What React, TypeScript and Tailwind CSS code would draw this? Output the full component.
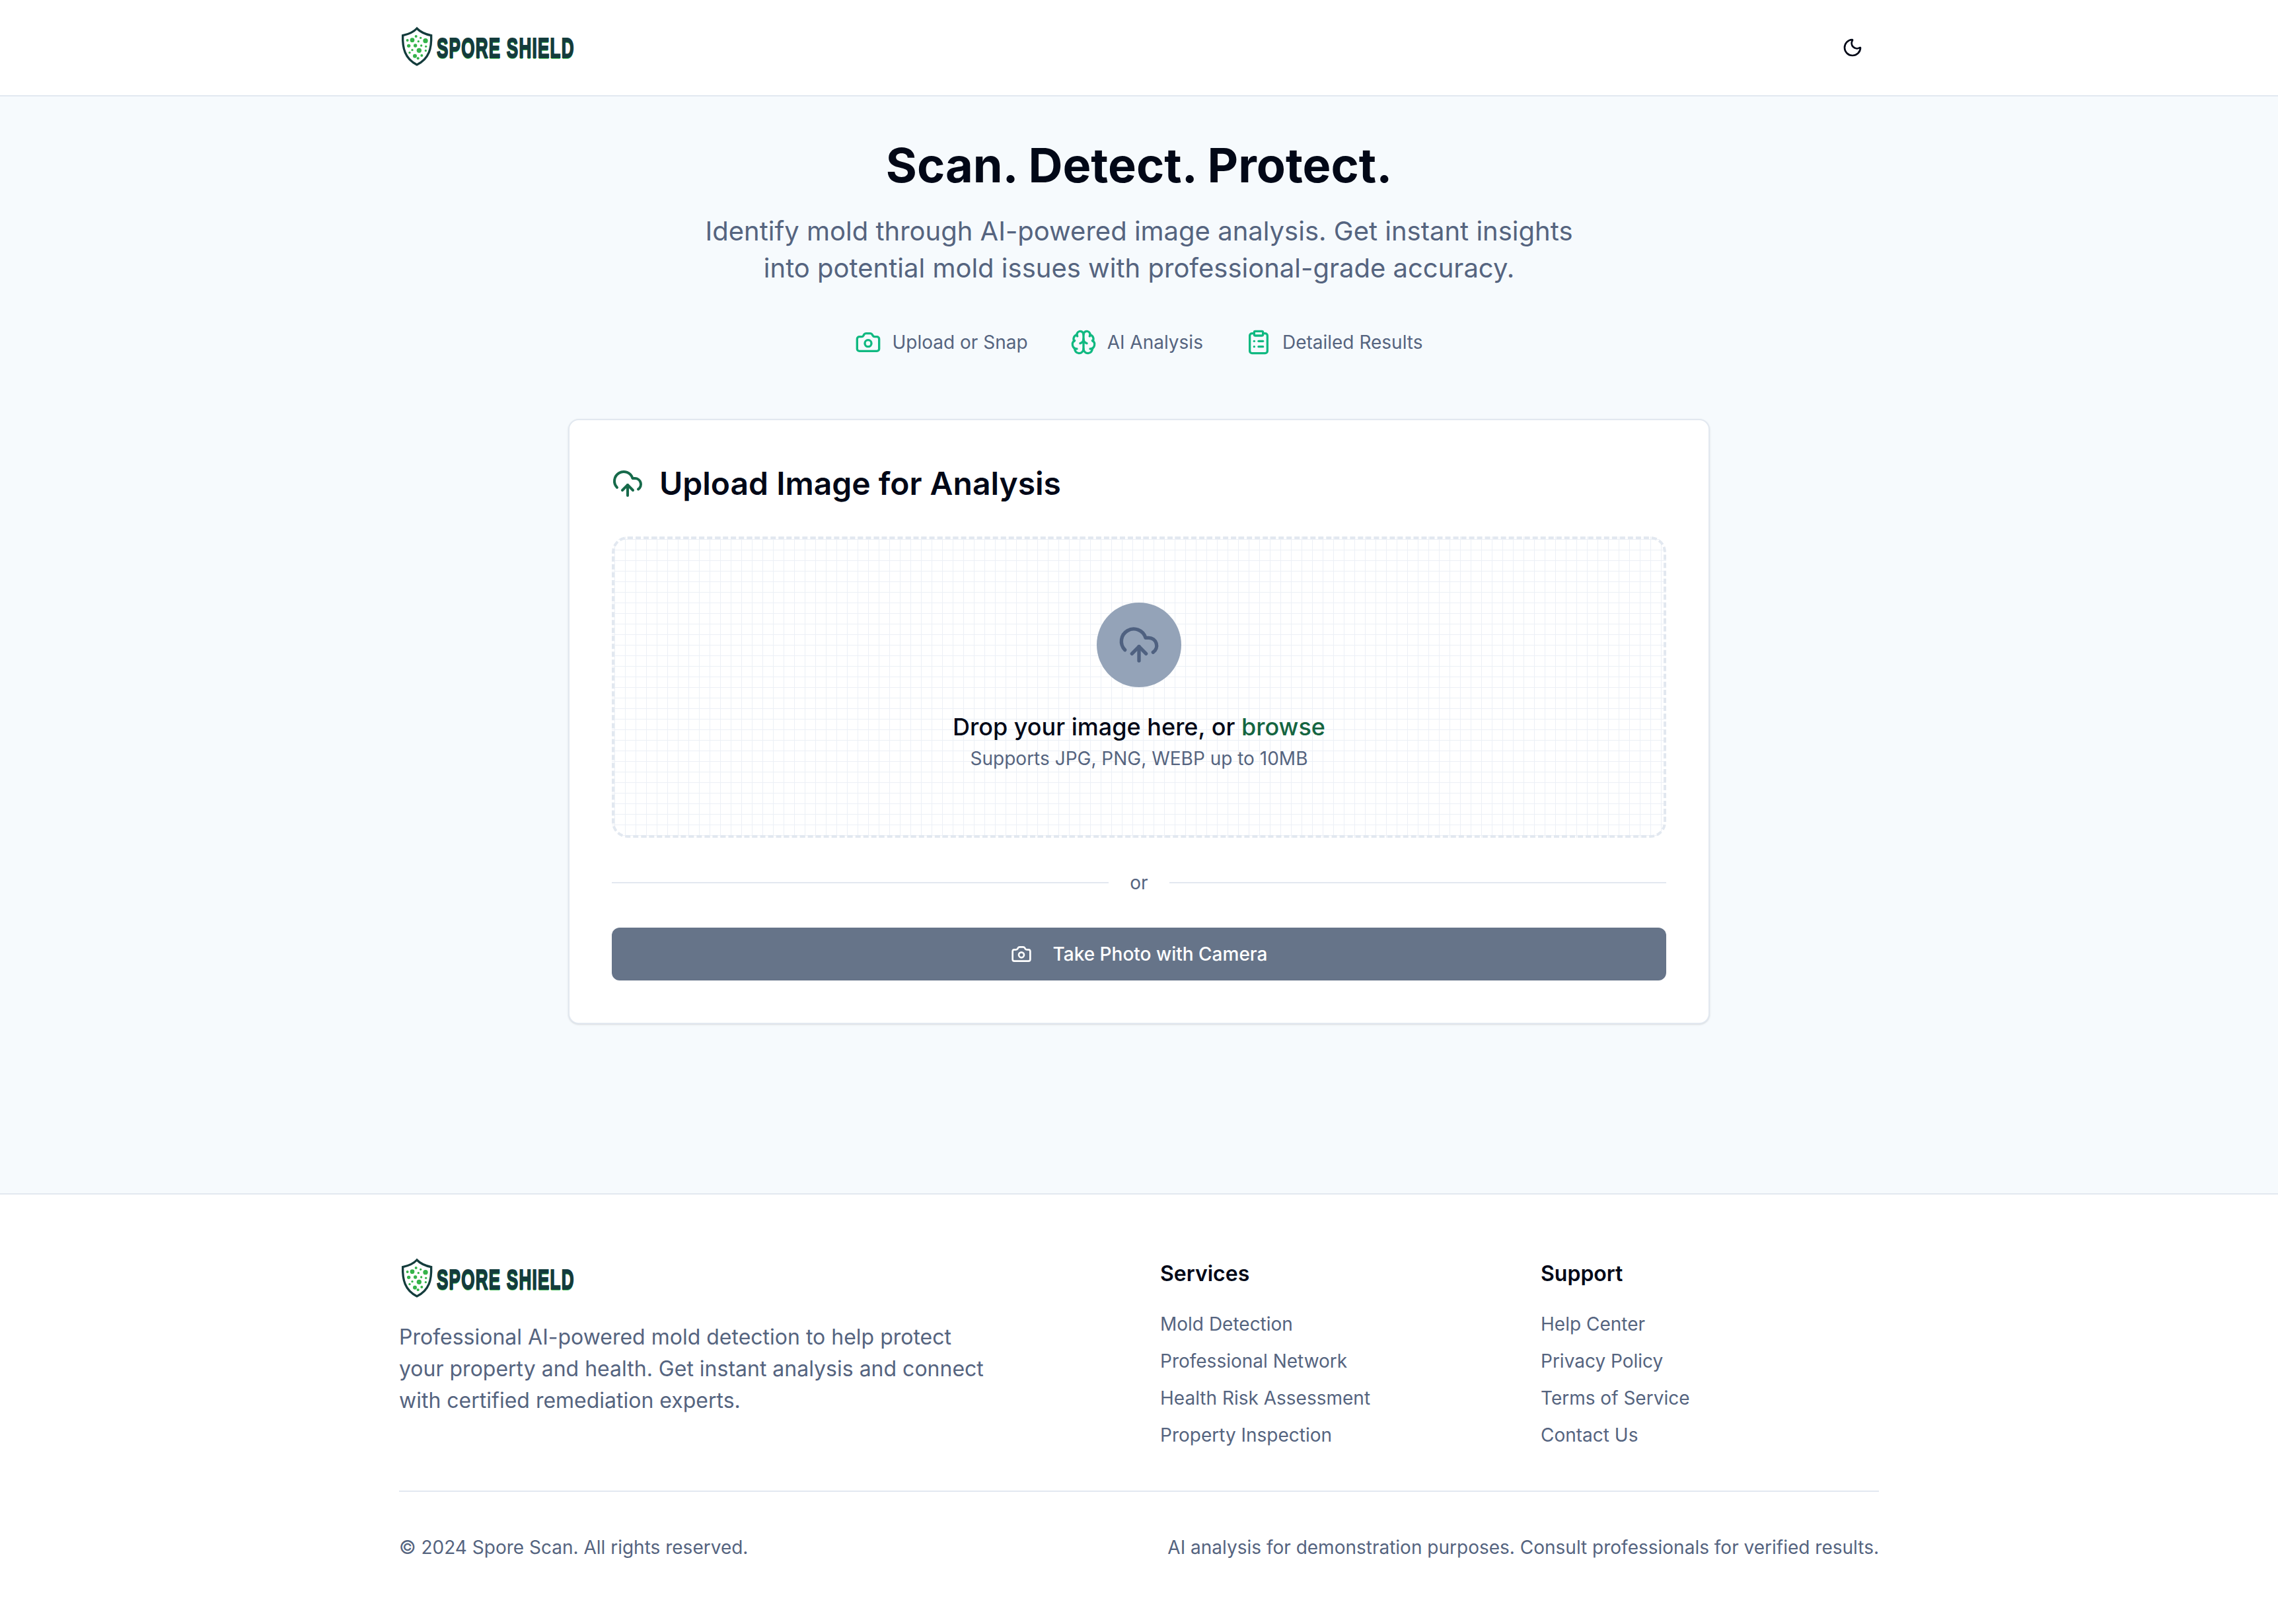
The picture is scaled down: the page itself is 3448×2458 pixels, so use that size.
import { Brain, Camera, ClipboardList, CloudUpload, Moon } from 'lucide-react';

const services = ['Mold Detection', 'Professional Network', 'Health Risk Assessment', 'Property Inspection'];
const support = ['Help Center', 'Privacy Policy', 'Terms of Service', 'Contact Us'];

// spots on the shield: cx, cy, r
const spots = [
  [72, 65, 10], [132, 68, 11], [50, 66, 6], [89, 48, 6], [110, 55, 5], [100, 71, 5],
  [56, 91, 8], [86, 90, 8], [113, 90, 5], [134, 94, 5], [72, 110, 5], [103, 112, 11],
  [133, 113, 5], [60, 122, 5], [84, 137, 9], [115, 135, 6], [98, 148, 6],
];

function Logo() {
  return (
    <div className="ml-[-4px] flex h-16 items-center">
      <svg viewBox="0 0 189 198" className="h-[66px] w-[63px] shrink-0">
        <path
          d="M93 12Q115 35 158 44C160 100 150 150 93 177C38 150 27 100 29 44Q72 35 93 12Z"
          fill="#fff"
          stroke="#143c3c"
          strokeWidth="10"
          strokeLinejoin="miter"
        />
        {spots.map(([cx, cy, r], i) => (
          <circle key={i} cx={cx} cy={cy} r={r} fill="#35b34a" />
        ))}
      </svg>
      <span className="ml-[-2px] mt-[2px] origin-left scale-x-[0.62] text-[42px] leading-none font-bold tracking-[2px] whitespace-nowrap text-[#143c3c] font-['Liberation_Sans',sans-serif] [-webkit-text-stroke:2px_#143c3c] [text-shadow:0_2px_0_#35b34a]">
        SPORE SHIELD
      </span>
    </div>
  );
}

function Feature({ icon, label }: { icon: React.ReactNode; label: string }) {
  return (
    <div className="flex items-center gap-4">
      {icon}
      <span className="text-[28px] leading-10 text-[#55647f]">{label}</span>
    </div>
  );
}

function LinkColumn({ title, links }: { title: string; links: string[] }) {
  return (
    <div>
      <h3 className="mb-8 text-[32px] leading-12 font-semibold text-[#020817]">{title}</h3>
      <ul className="flex flex-col gap-4">
        {links.map((l) => (
          <li key={l} className="text-[28px] leading-10 text-[#55647f]">{l}</li>
        ))}
      </ul>
    </div>
  );
}

export default function App() {
  return (
    <div className="flex min-h-screen flex-col bg-white font-['Inter',sans-serif] text-[#020817]">
      <header className="border-b-2 border-[#e2e8f0] bg-white">
        <div className="mx-auto flex h-36 w-[2304px] items-center justify-between px-8">
          <Logo />
          <button className="flex h-20 w-20 items-center justify-center">
            <Moon className="h-8 w-8" strokeWidth={2} />
          </button>
        </div>
      </header>

      <main className="flex-1 bg-[#f6fafd] pt-16">
        <div className="text-center">
          <h1 className="text-[72px] leading-20 font-bold">Scan. Detect. Protect.</h1>
          <p className="mx-auto mt-8 w-[1344px] text-[40px] leading-14 text-[#55647f]">
            Identify mold through AI-powered image analysis. Get instant insights into potential mold issues with professional-grade accuracy.
          </p>
          <div className="mt-16 flex items-center justify-center gap-16">
            <Feature icon={<Camera className="h-10 w-10 text-[#10b981]" strokeWidth={2} />} label="Upload or Snap" />
            <Feature icon={<Brain className="h-10 w-10 text-[#10b981]" strokeWidth={2} />} label="AI Analysis" />
            <Feature icon={<ClipboardList className="h-10 w-10 text-[#10b981]" strokeWidth={2} />} label="Detailed Results" />
          </div>
        </div>

        <section className="mx-auto mt-24 w-[1728px] rounded-2xl border-2 border-[#e2e8f0] bg-white p-16 shadow-sm">
          <div className="mb-12 flex items-center gap-6">
            <CloudUpload className="h-12 w-12 text-[#166a4a]" strokeWidth={2} />
            <h2 className="text-[48px] leading-16 font-semibold">Upload Image for Analysis</h2>
          </div>

          <div className="flex flex-col items-center rounded-3xl border-4 border-dashed border-[#e2e8f0] bg-[linear-gradient(#ecf0f6_1px,transparent_1px),linear-gradient(90deg,#ecf0f6_1px,transparent_1px)] bg-[size:16px_16px] py-24">
            <div className="flex h-32 w-32 items-center justify-center rounded-full bg-[#94a3b8]">
              <CloudUpload className="h-16 w-16 text-[#4f6180]" strokeWidth={2} />
            </div>
            <p className="mt-8 text-[36px] leading-14 font-medium">
              Drop your image here, or <span className="text-[#156541]">browse</span>
            </p>
            <p className="text-[28px] leading-10 text-[#55647f]">Supports JPG, PNG, WEBP up to 10MB</p>
          </div>

          <div className="my-12 flex items-center gap-8">
            <div className="h-0.5 flex-1 bg-[#e2e8f0]" />
            <span className="text-[28px] leading-10 text-[#55647f]">or</span>
            <div className="h-0.5 flex-1 bg-[#e2e8f0]" />
          </div>

          <button className="flex h-20 w-full items-center justify-center gap-8 rounded-xl bg-[#667489] text-[28px] font-medium text-white">
            <Camera className="h-8 w-8" strokeWidth={2} />
            Take Photo with Camera
          </button>
        </section>
      </main>

      <footer className="border-t-2 border-[#e2e8f0] bg-white py-24">
        <div className="mx-auto w-[2240px]">
          <div className="grid grid-cols-4 gap-16">
            <div className="col-span-2">
              <div className="mb-8"><Logo /></div>
              <p className="w-[896px] text-[32px] leading-12 text-[#55647f]">
                Professional AI-powered mold detection to help protect your property and health. Get instant analysis and connect with certified remediation experts.
              </p>
            </div>
            <LinkColumn title="Services" links={services} />
            <LinkColumn title="Support" links={support} />
          </div>
          <div className="mt-16 flex items-center justify-between border-t-2 border-[#e2e8f0] pt-16 text-[28px] leading-10 text-[#55647f]">
            <span>© 2024 Spore Scan. All rights reserved.</span>
            <span>AI analysis for demonstration purposes. Consult professionals for verified results.</span>
          </div>
        </div>
      </footer>
    </div>
  );
}
